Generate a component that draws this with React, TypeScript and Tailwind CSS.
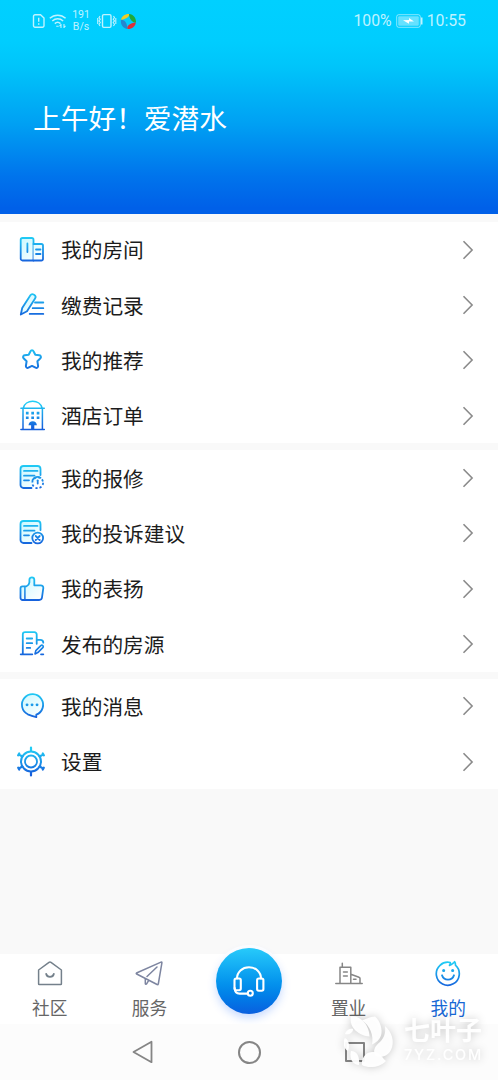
import type { ReactNode } from "react";
import clsx from "clsx";

const G = "url(#line)";

function Icon({ children }: { children: ReactNode }) {
  return (
    <svg width="32" height="32" viewBox="0 0 32 32" fill="none" stroke={G} strokeWidth="1.8" strokeLinecap="round" strokeLinejoin="round">
      {children}
    </svg>
  );
}

// Document body shared by the repair and complaint icons
const docLines = (
  <>
    <path d="M15.5 26H7.5a3 3 0 0 1-3-3V7a3 3 0 0 1 3-3h14a3 3 0 0 1 3 3v6" fill="url(#tint)" />
    <path d="M8 8.9h13.5M8 13.7h10.5M8 18.3h5" />
  </>
);

const icons = {
  room: (
    <Icon>
      <path d="M6.500 4h9.300a1.700 1.700 0 0 1 1.700 1.700v20.800h-11a1.800 1.800 0 0 1-1.800-1.800V5.800A1.800 1.800 0 0 1 6.500 4z" fill="url(#tint)" />
      <path d="M17.500 10h7.900a1.600 1.600 0 0 1 1.600 1.600v13.300a1.600 1.600 0 0 1-1.600 1.600h-7.900" fill="url(#tint)" />
      <path d="M11.400 9.500v8.500M20 15.500h4.500M20 20h4.500" />
    </Icon>
  ),
  pay: (
    <Icon>
      <path d="M4.800 25.500 6.200 19 14.400 6.300c1.700-2.700 6.500.2 4.800 3L11 22.300z" fill="url(#tint)" />
      <path d="M19 13.500h8.300M16.700 19.200h10.600M13.700 24.900h13.600" />
    </Icon>
  ),
  star: (
    <Icon>
      <path d="M14.500 7.200c.6-1.300 2.400-1.300 3 0l1.800 3.500 4.100.6c1.500.2 2 2 1 3l-3 3 .7 4.500c.3 1.500-1.200 2.500-2.500 1.900L16 21.900l-3.600 1.800c-1.300.6-2.800-.4-2.500-1.900l.7-4.500-3-3c-1-1-.5-2.800 1-3l4.100-.6z" strokeWidth="2" />
    </Icon>
  ),
  hotel: (
    <Icon>
      <path strokeWidth="1.500" d="M7.300 8c1-4 4.800-6.700 9.400-6.700S25.100 4 26.100 8M4.900 8.200h23.400M7 8.200v21.200M26.400 8.200v21.200M4.900 29.400h23.400" />
      <path stroke="none" fill={G} d="M9.900 11.700h2.700v2.700H9.900zM15.300 11.700H18v2.700h-2.700zM20.700 11.700h2.700v2.700h-2.700zM9.900 16.400h2.700v2.700H9.900zM15.300 16.400H18v2.700h-2.700zM20.700 16.400h2.700v2.700h-2.700zM12.500 25.200c.3-2.300 1.800-3.900 4.200-3.900s3.900 1.600 4.200 3.900h-2.600v4h-3.200v-4z" />
    </Icon>
  ),
  repair: (
    <Icon>
      {docLines}
      <path d="M16.500 18.200c1.500-3 5.200-4.200 8-2.500" />
      <circle cx="21.700" cy="20.800" r="5.400" strokeDasharray="2.200 2" strokeLinecap="butt" />
      <path d="M21.700 18.300v3.200" />
    </Icon>
  ),
  complaint: (
    <Icon>
      {docLines}
      <circle cx="21.700" cy="21" r="5.400" fill="#fff" />
      <path d="m19.700 19 4 4M23.700 19l-4 4" />
    </Icon>
  ),
  praise: (
    <Icon>
      <path d="M9 13.300h1.500c1.500-.7 2.700-2 2.900-4V6.800c0-3.300 4.900-3.300 4.900 0v5.500h6.500c1.600 0 2.700 1.300 2.500 2.800l-1.300 9.400a2.900 2.900 0 0 1-2.900 2.500H6.500a2 2 0 0 1-2-2v-9.700a2 2 0 0 1 2-2z" fill="url(#tint)" />
      <path d="M8.900 13.500V27" strokeWidth="1.500" />
    </Icon>
  ),
  listing: (
    <Icon>
      <path d="M4.700 26.300h11.600M6.800 26V6.500A2.300 2.300 0 0 1 9.100 4.200h9.300a2.300 2.300 0 0 1 2.300 2.300v9.300M10.700 10.500h5.500M10.700 15.200h5.500M10.700 19.900h3.500M20.700 11.900h3.600c2 0 3 1 3 2.800M25 26.300h2.300" />
      <path d="m19 25.900.8-3.300 5-5c1.400-1.300 3.400.6 2 2l-5 5z" strokeWidth="1.600" />
    </Icon>
  ),
  message: (
    <Icon>
      <path d="M20.300 27.200v-2.500a10.600 10.600 0 1 0-8.500-.4c2.800 1.200 5.500 2.100 8.500 2.900z" fill="url(#tint)" />
      <path d="M11 14.800h.1M16 14.800h.1M21 14.800h.1" strokeWidth="2.800" />
    </Icon>
  ),
  settings: (
    <Icon>
      <circle cx="15" cy="15.500" r="10" strokeWidth="2" />
      <circle cx="15" cy="15.500" r="6" />
      <path d="M15 1.500V5M15 26v3.500M6.300 10.500 2.700 8.400M23.700 10.500l3.600-2.100M6.300 20.500l-3.600 2.100M23.700 20.500l3.600 2.100M2.200 9.300l1-1.800M27.800 9.300l-1-1.800M2.200 21.700l1 1.800M27.800 21.700l-1 1.800" strokeWidth="2.200" />
    </Icon>
  ),
};

const groups: { label: string; icon: keyof typeof icons }[][] = [
  [
    { label: "我的房间", icon: "room" },
    { label: "缴费记录", icon: "pay" },
    { label: "我的推荐", icon: "star" },
    { label: "酒店订单", icon: "hotel" },
  ],
  [
    { label: "我的报修", icon: "repair" },
    { label: "我的投诉建议", icon: "complaint" },
    { label: "我的表扬", icon: "praise" },
    { label: "发布的房源", icon: "listing" },
  ],
  [
    { label: "我的消息", icon: "message" },
    { label: "设置", icon: "settings" },
  ],
];

function StatusBar() {
  return (
    <div className="flex h-[42px] items-center justify-between px-[32px] font-['Roboto',sans-serif] text-white/75">
      <div className="flex items-center">
        <svg width="14" height="16" viewBox="0 0 14 16" fill="none" stroke="currentColor" strokeWidth="1.400">
          <path d="M3 1.700h5.500L12 5v7.800a1.500 1.500 0 0 1-1.500 1.500H3a1.500 1.500 0 0 1-1.500-1.500V3.200A1.500 1.500 0 0 1 3 1.700zM6.700 4.800v4M6.700 10.300v1.500" />
        </svg>
        <svg className="ml-[3px]" width="18" height="16" viewBox="0 0 18 16" fill="none" stroke="currentColor" strokeWidth="1.500">
          <path d="M.8 5.300c4.500-4.200 11.300-4.200 15.800 0M3.300 8c3.200-3 7.700-3 10.800 0M5.800 10.600c1.700-1.600 4-1.600 5.700 0" />
          <path d="M7.200 13.300h2.500M12 11v4M10.500 13.200l1.500-1.700M15 15v-4M16.500 12.800 15 14.500" strokeWidth="1.100" />
        </svg>
        <div className="ml-[5px] w-[18px] text-center text-[10.500px] leading-[12.500px]">
          <div>191</div>
          <div>B/s</div>
        </div>
        <svg className="ml-[7px]" width="20" height="16" viewBox="0 0 20 16" fill="none" stroke="currentColor" strokeWidth="1.400">
          <rect x="5.500" y="1.600" width="8.500" height="12.800" rx="1.300" />
          <path d="m3 3-1 1.600 1.300 1.600L2 7.900l1.300 1.600L2 11.200 3 13M.7 5v6M16.500 3l1 1.600-1.300 1.600 1.300 1.700-1.300 1.600 1.300 1.700-1 1.800M18.800 5v6" strokeWidth="1.100" />
        </svg>
        <svg className="ml-[3px]" width="17" height="17" viewBox="0 0 17 17">
          <path d="M.9 7C1.600 3.200 4.900.7 9 .9 9.800 3 7.500 5.300.9 7z" fill="#f0cc22" />
          <path d="M9 .9c4.500.3 7.400 4.100 7 8.600-3.200.3-6.800-3.300-7-8.600z" fill="#20a83a" />
          <path d="M15.900 9.500c-.7 4-4 6.700-8.400 6.500-1.200-3 2.400-6.200 8.400-6.500z" fill="#dc3039" />
          <path d="M1 6.800c3.800-.3 6.700 3.900 6 9.100C2.900 15.300.2 11.400 1 6.800z" fill="#2487cf" />
        </svg>
      </div>
      <div className="flex items-center text-[15.800px]">
        <span>100%</span>
        <svg className="mx-[4px]" width="27" height="14" viewBox="0 0 27 14" fill="none">
          <rect x=".7" y=".7" width="23.600" height="12.600" rx="2" stroke="currentColor" strokeOpacity=".7" />
          <rect x="2.200" y="2.200" width="20.600" height="9.600" rx="1" fill="#fff" fillOpacity=".4" />
          <path d="M25 3.500h1.500v7H25z" fill="currentColor" />
          <path d="m7 6.300 6-.2V4l5 3.400-5 .1v2.300z" fill="#fff" />
        </svg>
        <span>10:55</span>
      </div>
    </div>
  );
}

function Chevron() {
  return (
    <svg className="ml-auto" width="12" height="20" viewBox="0 0 12 20" fill="none" stroke="#8a8a8a" strokeWidth="1.600">
      <path d="m1.500 1.200 8.600 8.800-8.600 8.800" />
    </svg>
  );
}

const tabIconProps = { width: 30, height: 28, viewBox: "0 0 30 28", fill: "none", strokeWidth: 1.5, strokeLinejoin: "round", strokeLinecap: "round" } as const;

function Tab({ label, active, children }: { label: string; active?: boolean; children: ReactNode }) {
  return (
    <div className="flex flex-1 flex-col items-center pt-[5px]">
      {children}
      <span className={clsx("mt-[9.500px] text-[17.700px] leading-[20px]", active ? "text-[#1767d5]" : "text-[#666]")}>{label}</span>
    </div>
  );
}

function TabBar() {
  return (
    <div className="flex h-[70px] bg-white">
      <Tab label="社区">
        <svg {...tabIconProps} stroke="#74808b">
          <path d="M3.600 11 14 3.300c.7-.5 1.300-.5 2 0L26.400 11v14c0 .4-.2.600-.6.600H4.200c-.4 0-.6-.2-.6-.6z" />
          <path d="M11.200 15c.8 3.800 6.800 3.800 7.600 0" strokeWidth="1.800" />
        </svg>
      </Tab>
      <Tab label="服务">
        <svg {...tabIconProps} stroke="#7d85a0">
          <path d="M2.500 14 27 3.100c.7-.3 1 .1.900.7L24.300 25c-.1.800-.6.900-1.200.5L2.700 15c-.5-.3-.6-.7-.2-1z" />
          <path d="m23 8-10 9.500M11.300 19.800v4.700c0 .9.900 1.100 1.300.4l2-3.300" />
        </svg>
      </Tab>
      <div className="flex flex-1 justify-center">
        <div className="-mt-[6.500px] flex size-[66px] items-center justify-center rounded-full bg-gradient-to-b from-[#27cafa] to-[#0b5fdf] shadow-[0_4px_8px_rgba(40,110,255,0.25),0_0_0_3px_#fff]">
          <svg width="34" height="32" viewBox="0 0 34 32" fill="none" stroke="#fff" strokeWidth="2.100" strokeLinejoin="round" strokeLinecap="round">
            <path d="M5 13.500C5 7 10.300 2.200 17 2.200s12 4.800 12 11.300" />
            <rect x="2.500" y="13.500" width="6.300" height="11.700" rx="1.700" />
            <rect x="25.100" y="13.500" width="6.300" height="12.200" rx="1.700" />
            <path d="M2.700 23c0 3.800 1.500 5.600 5 5.600h7.800" />
            <circle cx="18.300" cy="28.300" r="2.500" />
          </svg>
        </div>
      </div>
      <Tab label="置业">
        <svg {...tabIconProps} stroke="#868686">
          <path d="M1.800 24.400h26.400M6 24V8.200h10.800V24M8.300 7.800V4.300M16.800 15.200l8.200 3c.6.2 1 .7 1 1.300V24M9.500 13h3.800M9.500 17h3.800M19.500 20.300h2.500" />
        </svg>
      </Tab>
      <Tab label="我的" active>
        <svg {...tabIconProps} stroke={G} strokeWidth="1.700">
          <path d="M19.600 4.600c.9-.4 1.500-1 2-1.900.7 1 1 2.100.8 3.400A11.500 11.500 0 1 1 17.300 3.500c.1 1.100-.2 2-.8 2.800 1.300-.2 2.400-.8 3.100-1.700z" />
          <path d="M9 16.300c1.800 5.700 10.200 5.700 12 0" strokeWidth="1.900" />
          <path d="M10.600 11.500h.1M19.600 11.500h.1" strokeWidth="3" />
        </svg>
      </Tab>
    </div>
  );
}

function Watermark() {
  return (
    <div className="absolute bottom-[14px] right-[13px] flex items-center gap-[8px] text-white/95 drop-shadow-[0_0_4px_rgba(0,0,0,0.22)]">
      <svg className="-mb-[3px]" width="52" height="54" viewBox="0 0 52 54" fill="currentColor">
        <path d="M7 1.500c6-1 13 4 16 10 2 4 2 6 2.500 10C16 21 4.500 13 7 1.500z" />
        <path d="M18 5.500c3-1 8-4 13-4 5 4 8 13 6 19-2 5-5 7-9 9 2-9-2-19-10-24z" />
        <path d="M41 11c7 6 10 16 6 24-3 6-9 8-15 6-4-5-1-10 4-14 4-4 6-9 5-16z" />
        <path d="M18 50c-1-8 5-14 12-13 7 1 9 7 12 9-5 6-17 8-24 4z" />
        <path d="M1 19c1-4 5-6 8-5 0 4-4 6-8 5zM1 23c4 2 5 8 3 13-4-2-6-9-3-13zM7 36c6 0 9 6 8 14-6 0-10-6-8-14z" />
      </svg>
      <div className="w-[81px] shrink-0 whitespace-nowrap">
        <div className="text-[26px] font-bold leading-[24px]">七叶子</div>
        <div className="mt-[5px] font-['Inter',sans-serif] text-[14.500px] font-medium leading-[18px] tracking-[1.800px]">7YZ.COM</div>
      </div>
    </div>
  );
}

export default function App() {
  return (
    <div className="relative flex h-[1080px] w-[498px] flex-col overflow-hidden bg-[#f9f9f9] font-['Noto_Sans_CJK_SC',sans-serif]">
      {/* Shared gradients for the line icons */}
      <svg className="absolute size-0">
        <defs>
          <linearGradient id="line" gradientUnits="userSpaceOnUse" x1="16" y1="3" x2="16" y2="28">
            <stop offset="0" stopColor="#20cdf5" />
            <stop offset="1" stopColor="#1660dc" />
          </linearGradient>
          <linearGradient id="tint" gradientUnits="userSpaceOnUse" x1="4" y1="4" x2="26" y2="27">
            <stop offset="0" stopColor="#c9f8ff" />
            <stop offset="1" stopColor="#ffffff" />
          </linearGradient>
        </defs>
      </svg>

      <header className="h-[214px] bg-[linear-gradient(180deg,#00d0ff_0px,#00cdfe_42px,#00c5fa_66px,#00a0f3_124px,#0074ec_176px,#0060e8_208px)]">
        <StatusBar />
        <h1 className="mt-[55px] pl-[33px] text-[27.700px] font-normal leading-[40px] text-white">上午好！爱潜水</h1>
      </header>

      <main className="flex flex-1 flex-col gap-[7px] pt-[8px]">
        {groups.map((rows, i) => (
          <section key={i} className="bg-white">
            {rows.map((row) => (
              <div key={row.label} className="flex h-[55.350px] items-center pl-[15.500px] pr-[24px]">
                {icons[row.icon]}
                <span className="-mt-px ml-[13.500px] text-[20.700px] leading-[30px] text-[#1c1c1c]">{row.label}</span>
                <Chevron />
              </div>
            ))}
          </section>
        ))}
      </main>

      <TabBar />

      {/* System navigation */}
      <div className="flex h-[56px] items-center bg-[#fcfcfc] pl-[131px]">
        <svg width="24" height="24" viewBox="0 0 24 24" fill="none" stroke="#858585" strokeWidth="1.800" strokeLinejoin="round">
          <path d="M2.500 12 20.500 1.800v20.400z" />
        </svg>
        <div className="ml-[82.500px] size-[23px] rounded-full border-2 border-[#858585]" />
        <div className="ml-[84px] size-[20px] rounded-[1px] border-2 border-[#858585]" />
      </div>

      <Watermark />
    </div>
  );
}
